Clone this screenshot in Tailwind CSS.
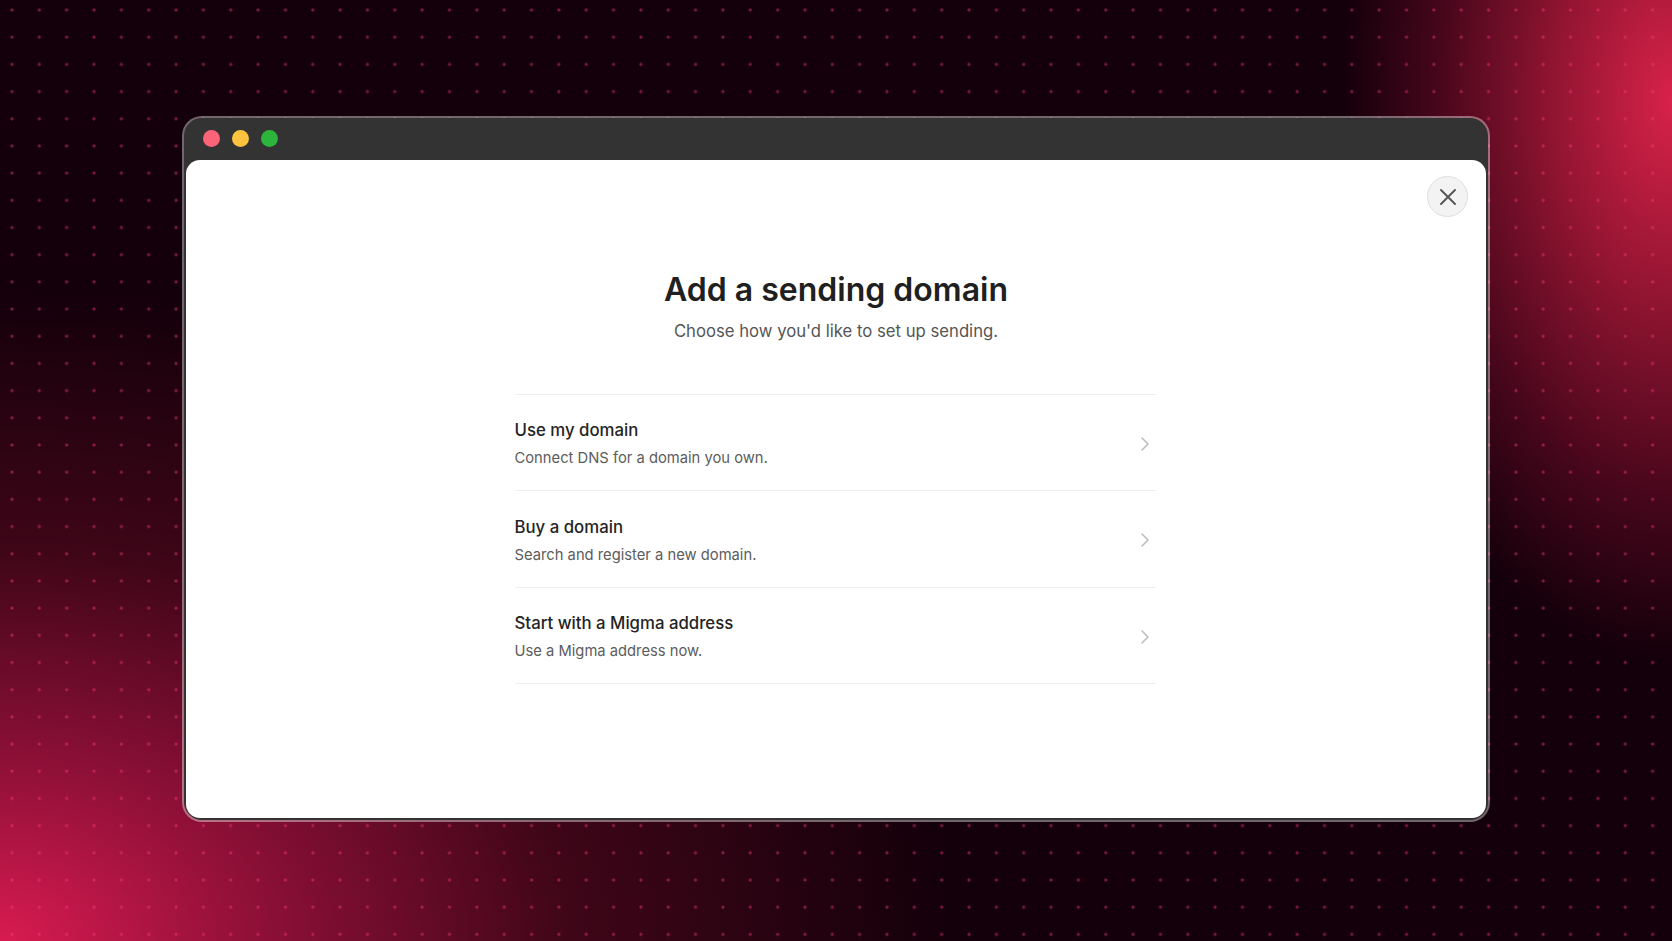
<!DOCTYPE html>
<html>
<head>
<meta charset="utf-8">
<script src="https://cdn.jsdelivr.net/npm/@tailwindcss/browser@4"></script>
</head>
<body class="m-0">
<div class="relative w-[1672px] h-[941px] overflow-hidden flex items-center justify-center pb-[3px] font-['Inter',sans-serif] bg-[#14000a] bg-[radial-gradient(circle_at_center,rgba(255,60,130,0.5)_0,rgba(255,60,130,0.4)_1.2px,transparent_2px),radial-gradient(ellipse_950px_650px_at_0px_941px,#d81b50_0%,#8f1038_27%,#3f0618_60%,rgba(20,0,10,0)_100%),radial-gradient(ellipse_330px_560px_at_1672px_100px,#d8224a_0%,#8f1430_37%,#45061b_72%,rgba(20,0,10,0)_100%)] bg-[length:27.35px_27.2px,100%_100%,100%_100%] bg-[position:-1.7px_-3.6px,0_0,0_0]">
  <div class="w-[1308px] h-[706px] flex flex-col rounded-[20px] border-2 border-white/40 bg-[#333333] bg-clip-padding">
    <div class="h-[42px] shrink-0 flex items-center gap-[12px] pl-[19px] pb-[2px]">
      <span class="w-[17px] h-[17px] rounded-full bg-[#fb6376]"></span>
      <span class="w-[17px] h-[17px] rounded-full bg-[#fdc33f]"></span>
      <span class="w-[17px] h-[17px] rounded-full bg-[#2cb43c]"></span>
    </div>
    <div class="relative flex-1 ml-[2px] mr-[2px] mb-[2px] bg-white rounded-[14px] flex flex-col items-center">
      <button class="absolute top-[16px] right-[18px] w-[41px] h-[41px] rounded-full bg-[#f3f3f3] border border-[#dedede] flex items-center justify-center">
        <svg viewBox="0 0 16 16" class="w-[16px] h-[16px]" fill="none" stroke="#555555" stroke-width="1.9" stroke-linecap="round"><path d="M1 1L15 15M15 1L1 15"/></svg>
      </button>
      <h1 class="mt-[110px] text-[32px] leading-[40px] font-semibold text-[#202020]">Add a sending domain</h1>
      <p class="mt-[9px] text-[16.7px] leading-[24px] text-[#555555]">Choose how you'd like to set up sending.</p>
      <div class="mt-[50.5px] w-[641px] -ml-[2px] border-t border-[#eeeeee]">
        <div class="h-[96.5px] border-b border-[#eeeeee] flex items-center justify-between pt-[3px] pr-[7px]">
          <div>
            <div class="text-[16.8px] leading-[24px] font-[450] text-[#242424]">Use my domain</div>
            <div class="mt-[5px] text-[14.75px] leading-[22px] text-[#5c5c5c]">Connect DNS for a domain you own.</div>
          </div>
          <svg viewBox="0 0 8 14" class="w-[8px] h-[14px]" fill="none" stroke="#bdbdbd" stroke-width="1.6" stroke-linecap="round" stroke-linejoin="round"><path d="M1 1L7 7L1 13"/></svg>
        </div>
        <div class="h-[96.5px] border-b border-[#eeeeee] flex items-center justify-between pt-[3px] pr-[7px]">
          <div>
            <div class="text-[16.8px] leading-[24px] font-[450] text-[#242424]">Buy a domain</div>
            <div class="mt-[5px] text-[14.75px] leading-[22px] text-[#5c5c5c]">Search and register a new domain.</div>
          </div>
          <svg viewBox="0 0 8 14" class="w-[8px] h-[14px]" fill="none" stroke="#bdbdbd" stroke-width="1.6" stroke-linecap="round" stroke-linejoin="round"><path d="M1 1L7 7L1 13"/></svg>
        </div>
        <div class="h-[96.5px] border-b border-[#eeeeee] flex items-center justify-between pt-[3px] pr-[7px]">
          <div>
            <div class="text-[16.8px] leading-[24px] font-[450] text-[#242424]">Start with a Migma address</div>
            <div class="mt-[5px] text-[14.75px] leading-[22px] text-[#5c5c5c]">Use a Migma address now.</div>
          </div>
          <svg viewBox="0 0 8 14" class="w-[8px] h-[14px]" fill="none" stroke="#bdbdbd" stroke-width="1.6" stroke-linecap="round" stroke-linejoin="round"><path d="M1 1L7 7L1 13"/></svg>
        </div>
      </div>
    </div>
  </div>
</div>
</body>
</html>
